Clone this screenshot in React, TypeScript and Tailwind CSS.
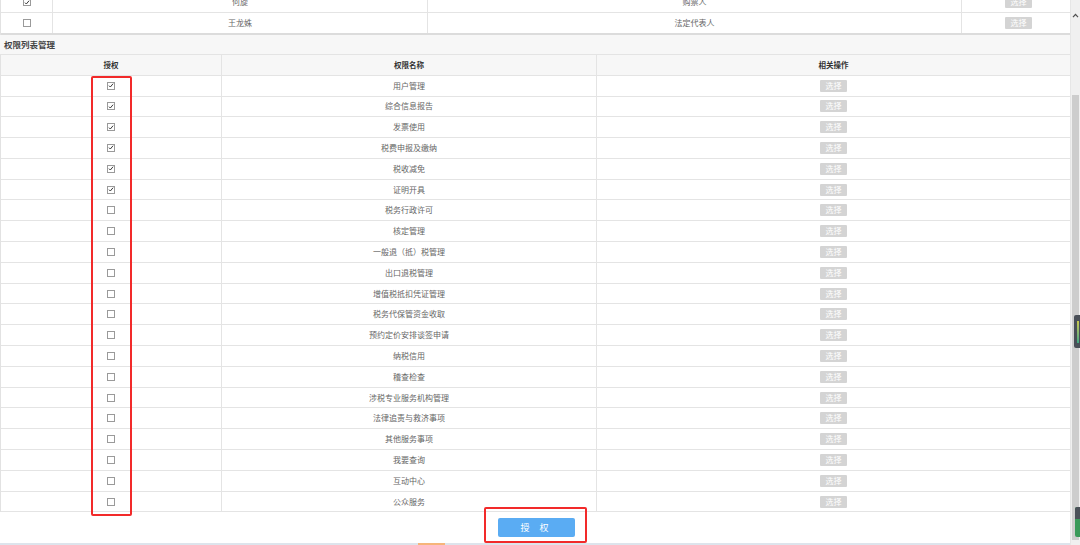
import React from "react";

const perms = [
  "用户管理",
  "综合信息报告",
  "发票使用",
  "税费申报及缴纳",
  "税收减免",
  "证明开具",
  "税务行政许可",
  "核定管理",
  "一般退（抵）税管理",
  "出口退税管理",
  "增值税抵扣凭证管理",
  "税务代保管资金收取",
  "预约定价安排谈签申请",
  "纳税信用",
  "稽查检查",
  "涉税专业服务机构管理",
  "法律追责与救济事项",
  "其他服务事项",
  "我要查询",
  "互动中心",
  "公众服务",
];

function Box({ checked }: { checked?: boolean }) {
  return (
    <span className="inline-flex h-[8px] w-[8px] items-center justify-center border border-[#9a9a9a] bg-white">
      {checked ? (
        <svg viewBox="0 0 8 8" className="h-[7px] w-[7px]">
          <path d="M1.3 4.2 L3.1 6 L6.8 1.6" fill="none" stroke="#333" strokeWidth="1.3" />
        </svg>
      ) : null}
    </span>
  );
}

function PickButton() {
  return (
    <span className="inline-flex h-[12px] w-[27px] items-center justify-center rounded-[1px] bg-[#d4d4d4] text-[8px] leading-none text-white">
      选择
    </span>
  );
}

export default function App() {
  const font = { fontFamily: '"Noto Sans CJK SC", "Noto Sans", sans-serif' };
  return (
    <div className="relative flex h-[545px] w-[1080px] overflow-hidden bg-white" style={font}>
      <div className="flex w-[1070px] flex-col">
        {/* upper table (scrolled, first row cut) */}
        <div className="-mt-[8px] border-l border-[#e2e2e2]">
          <div className="grid h-[21px] grid-cols-[52px_375px_534px_1fr] border-b border-[#e4e4e4] text-[8px] text-[#666]">
            <div className="flex items-center justify-center border-r border-[#e4e4e4]">
              <Box checked />
            </div>
            <div className="flex items-center justify-center border-r border-[#e4e4e4]">何旋</div>
            <div className="flex items-center justify-center border-r border-[#e4e4e4]">购票人</div>
            <div className="flex items-center justify-center pl-[5px]">
              <PickButton />
            </div>
          </div>
          <div className="grid h-[22px] grid-cols-[52px_375px_534px_1fr] border-b-2 border-[#dcdcdc] text-[8px] text-[#666]">
            <div className="flex items-center justify-center border-r border-[#e4e4e4]">
              <Box />
            </div>
            <div className="flex items-center justify-center border-r border-[#e4e4e4]">王龙姝</div>
            <div className="flex items-center justify-center border-r border-[#e4e4e4]">法定代表人</div>
            <div className="flex items-center justify-center pl-[5px]">
              <PickButton />
            </div>
          </div>
        </div>

        {/* section title */}
        <div className="flex h-[20px] items-center border-b border-[#e4e4e4] bg-[#f7f7f7] pl-[4px] text-[8.5px] font-bold text-[#444]">
          权限列表管理
        </div>

        {/* permission table */}
        <div className="relative border-l border-[#e2e2e2]">
          <div className="grid h-[21px] grid-cols-[221px_375px_1fr] border-b border-[#e4e4e4] bg-[#f7f7f7] text-[7.5px] font-bold text-[#333]">
            <div className="flex items-center justify-center border-r border-[#e4e4e4]">授权</div>
            <div className="flex items-center justify-center border-r border-[#e4e4e4]">权限名称</div>
            <div className="flex items-center justify-center">相关操作</div>
          </div>
          {perms.map((name, i) => (
            <div
              key={name}
              className="grid h-[20.8px] grid-cols-[221px_375px_1fr] border-b border-[#e4e4e4] text-[8px] text-[#666]"
            >
              <div className="flex items-center justify-center border-r border-[#e4e4e4]">
                <Box checked={i < 6} />
              </div>
              <div className="flex items-center justify-center border-r border-[#e4e4e4]">{name}</div>
              <div className="flex items-center justify-center">
                <PickButton />
              </div>
            </div>
          ))}
          {/* annotation around checkbox column */}
          <div className="pointer-events-none absolute left-[90px] top-[21px] h-[440px] w-[41px] rounded-[2px] border-2 border-[#f22a2a]" />
        </div>

        {/* footer */}
        <div className="relative flex h-[31px] items-start justify-center pl-[3px] pt-[6px]">
          <button className="flex h-[19px] w-[77px] items-center justify-center rounded-[2px] bg-[#5aacf3] text-[9px] tracking-[4px] text-white">
            授 权
          </button>
          <div className="pointer-events-none absolute left-[484px] top-[-5px] h-[36px] w-[103px] rounded-[2px] border-2 border-[#f22a2a]" />
        </div>
        <div className="flex h-[2px] bg-[#dde4ec]">
          <div className="ml-[418px] w-[27px] bg-[#f6b57a]" />
        </div>
      </div>

      {/* vertical scrollbar */}
      <div className="relative flex w-[10px] flex-col border-l border-[#e6e6e6] bg-[#f0f0f0]">
        <div className="flex h-[20px] items-end justify-center pb-[2px]">
          <svg viewBox="0 0 8 6" className="h-[5px] w-[7px]">
            <path d="M1 5 L4 1.6 L7 5" fill="none" stroke="#505050" strokeWidth="1.5" />
          </svg>
        </div>
        <div className="ml-[1px] mt-[75px] h-[445px] w-[7px] bg-[#cdcdcd]" />
        <div className="absolute left-[3px] top-[315px] flex h-[33px] w-[7px] items-center justify-center rounded-l-[2px] bg-[#4a5058]">
          <div className="h-[22px] w-[2px] bg-gradient-to-b from-[#c9c94a] to-[#3ca884]" />
        </div>
        <div className="absolute left-[4px] top-[507px] h-[30px] w-[6px] rounded-l-[2px] bg-[#3a9a5a]">
          <div className="h-[12px] w-[6px] rounded-tl-[2px] bg-[#4a5058]" />
        </div>
      </div>
    </div>
  );
}
